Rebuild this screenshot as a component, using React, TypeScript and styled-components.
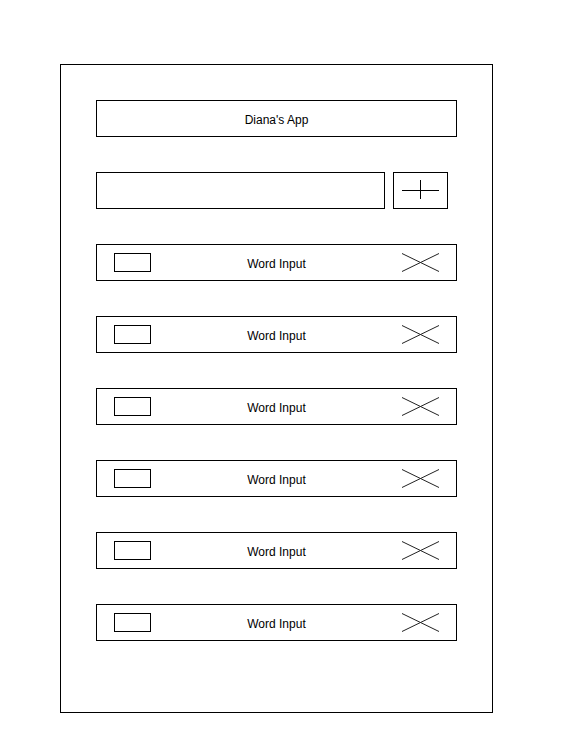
import React from "react";
import styled, { createGlobalStyle } from "styled-components";

const Global = createGlobalStyle`
  html, body { margin: 0; padding: 0; background: #fff; }
  body { font-family: "Liberation Sans", Arial, sans-serif; color: #000; }
`;

const Frame = styled.div`
  box-sizing: border-box;
  margin: 64px 0 0 60px;
  width: 433px;
  height: 649px;
  border: 1px solid #000;
  padding: 35px 0 0 35px;
  display: flex;
  flex-direction: column;
  gap: 35px;
`;

const Header = styled.div`
  box-sizing: border-box;
  width: 361px;
  height: 37px;
  border: 1px solid #000;
  display: flex;
  align-items: center;
  justify-content: center;
  font-size: 12px;
  padding-top: 2px;
`;

const AddRow = styled.div`
  display: flex;
  gap: 8px;
  height: 37px;
`;

const TextBox = styled.div`
  box-sizing: border-box;
  width: 289px;
  height: 37px;
  border: 1px solid #000;
`;

const AddButton = styled.div`
  box-sizing: border-box;
  width: 55px;
  height: 37px;
  border: 1px solid #000;
  display: flex;
  align-items: center;
  justify-content: center;
`;

const WordRow = styled.div`
  box-sizing: border-box;
  width: 361px;
  height: 37px;
  border: 1px solid #000;
  display: grid;
  grid-template-columns: 1fr auto 1fr;
  align-items: center;
  padding: 0 17px 0 17px;
`;

const CheckBox = styled.div`
  box-sizing: border-box;
  width: 37px;
  height: 19px;
  border: 1px solid #000;
  justify-self: start;
`;

const Label = styled.span`
  font-size: 12px;
  padding-top: 2px;
`;

const Remove = styled.svg`
  justify-self: end;
  display: block;
`;

const PlusIcon = () => (
  <svg width="37" height="35" viewBox="0 0 37 35" style={{ display: "block" }}>
    <line x1="0" y1="17.5" x2="37" y2="17.5" stroke="#000" strokeWidth="1" />
    <line x1="18.5" y1="7" x2="18.5" y2="26" stroke="#000" strokeWidth="1" />
  </svg>
);

const XIcon = () => (
  <Remove width="37" height="19" viewBox="0 0 37 19">
    <line x1="0" y1="0.5" x2="37" y2="18.5" stroke="#222" strokeWidth="1" />
    <line x1="0" y1="18.5" x2="37" y2="0.5" stroke="#222" strokeWidth="1" />
  </Remove>
);

const rows = [0, 1, 2, 3, 4, 5];

export default function App() {
  return (
    <>
      <Global />
      <Frame>
        <Header>Diana's App</Header>
        <AddRow>
          <TextBox />
          <AddButton>
            <PlusIcon />
          </AddButton>
        </AddRow>
        {rows.map((r) => (
          <WordRow key={r}>
            <CheckBox />
            <Label>Word Input</Label>
            <XIcon />
          </WordRow>
        ))}
      </Frame>
    </>
  );
}
